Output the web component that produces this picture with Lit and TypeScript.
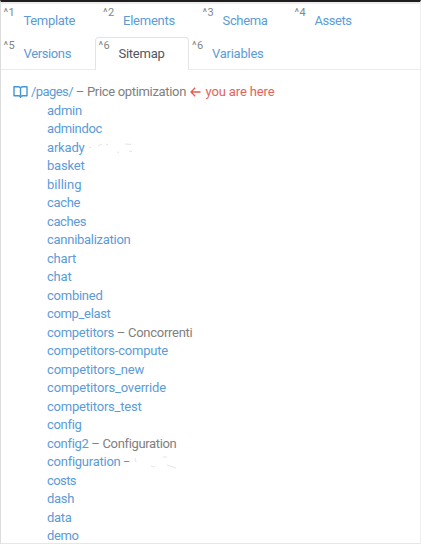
import { LitElement, html, css, svg, nothing } from "lit";
import { customElement } from "lit/decorators.js";

type Tab = { key: string; label: string; text: number; width: number; active?: boolean };
type Page = { name: string; w: number; title?: string; tw?: number; dash?: boolean; marks?: "a" | "b" };

const tabs: Tab[][] = [
  [
    { key: "^1", label: "Template", text: 51.5, width: 99.5 },
    { key: "^2", label: "Elements", text: 52, width: 99.5 },
    { key: "^3", label: "Schema", text: 45, width: 92 },
    { key: "^4", label: "Assets", text: 37, width: 85 },
  ],
  [
    { key: "^5", label: "Versions", text: 47.5, width: 95 },
    { key: "^6", label: "Sitemap", text: 46, width: 93.5, active: true },
    { key: "^6", label: "Variables", text: 51.5, width: 99 },
  ],
];

const pages: Page[] = [
  { name: "admin", w: 35 },
  { name: "admindoc", w: 55 },
  { name: "arkady", w: 37.5, marks: "a" },
  { name: "basket", w: 37.5 },
  { name: "billing", w: 34.5 },
  { name: "cache", w: 33 },
  { name: "caches", w: 39 },
  { name: "cannibalization", w: 83.5 },
  { name: "chart", w: 29 },
  { name: "chat", w: 24.5 },
  { name: "combined", w: 55.5 },
  { name: "comp_elast", w: 63.5 },
  { name: "competitors", w: 67, title: "Concorrenti", tw: 64.5 },
  { name: "competitors-compute", w: 121 },
  { name: "competitors_new", w: 97 },
  { name: "competitors_override", w: 119 },
  { name: "competitors_test", w: 94.5 },
  { name: "config", w: 34 },
  { name: "config2", w: 41, title: "Configuration", tw: 73.5 },
  { name: "configuration", w: 73, dash: true, marks: "b" },
  { name: "costs", w: 29 },
  { name: "dash", w: 27 },
  { name: "data", w: 24.5 },
  { name: "demo", w: 31.5 },
];

const marks = {
  a: svg`<path d="M4 8.5h2M13 6.5l4-1M21 5.5h2M32 13l2 .5M40 5l6 .5M44 12l3 .5"/>`,
  b: svg`<path d="M3 5l1 4M19 13l4 1M31 4h4M35 12l9 3"/>`,
};

const pen = document.createElement("canvas").getContext("2d")!;

/** Letter spacing that sets the text to the given advance width. */
const tracking = (text: string, width: number) => {
  pen.font = "13px Roboto";
  return `letter-spacing:${((width - pen.measureText(text).width) / text.length).toFixed(3)}px`;
};

const fitted = (text: string, width: number, cls = "") =>
  html`<span class="text ${cls}" style=${tracking(text, width)}>${text}</span>`;

@customElement("app-root")
export class AppRoot extends LitElement {
  static styles = css`
    :host {
      display: block;
      box-sizing: border-box;
      width: 421px;
      height: 544px;
      overflow: hidden;
      background: #fff;
      border-top: 2px solid #1f1d1e;
      border-left: 1px solid #dcdcdc;
      border-right: 1px solid #eee;
      border-bottom: 1px solid #e6e6e6;
      font: 13px/18.5px Roboto, "Liberation Sans", sans-serif;
      font-variant-ligatures: none;
      color: #808080;
    }
    .tabs {
      box-sizing: border-box;
      height: 68px;
      padding-top: 2px;
      border-top: 2px solid #ececec;
      border-bottom: 1px solid #ececec;
    }
    .row {
      display: flex;
      height: 31px;
      margin-left: -1px;
    }
    .row + .row {
      height: 33px;
    }
    .tab {
      box-sizing: border-box;
      position: relative;
      flex: none;
      padding: 6px 0 0 23.5px;
      color: #5b9bd8;
    }
    .row + .row .tab {
      padding-top: 8px;
    }
    .row + .row .active {
      color: #50565e;
      background: #fff;
      border: 1px solid #e4e4e4;
      border-bottom: 0;
      border-radius: 4px 4px 0 0;
      padding: 7px 0 0 22.5px;
      height: 33px;
    }
    .key {
      position: absolute;
      left: 3.5px;
      top: 1px;
      font-size: 11px;
      line-height: 12px;
      color: #858585;
      letter-spacing: 0.5px;
    }
    .row + .row .key {
      top: 3px;
    }
    .row + .row .active .key {
      left: 2.5px;
      top: 2px;
    }
    .tree {
      padding: 13px 0 0 12px;
    }
    .line {
      display: flex;
      height: 18.5px;
      white-space: pre;
    }
    .child {
      padding-left: 34px;
    }
    .text {
      flex: none;
    }
    .link {
      color: #5b9bd8;
    }
    .here {
      color: #e2635a;
    }
    .dash {
      width: 14px;
      text-align: center;
    }
    .short {
      width: 12px;
      font-size: 11px;
    }
    .book {
      width: 15px;
      height: 14px;
      margin: 2px 3px 0 0;
      fill: none;
      stroke: #3f97d8;
      stroke-width: 1.4;
      stroke-linejoin: round;
    }
    .arrow {
      width: 11px;
      height: 11px;
      margin: 3px 5px 0 3.5px;
      fill: none;
      stroke: #e25a50;
      stroke-width: 1.3;
    }
    .marks {
      width: 48px;
      height: 18px;
      fill: none;
      stroke: #ddd;
      stroke-width: 0.8;
    }
  `;

  private renderTab(t: Tab) {
    return html`<div class="tab ${t.active ? "active" : ""}" style="width:${t.width}px"><span class="key">${t.key}</span>${fitted(t.label, t.text)}</div>`;
  }

  private renderPage(p: Page) {
    return html`<div class="line child">${fitted(p.name, p.w, "link")}${p.title ? html`<span class="dash">–</span>${fitted(p.title, p.tw!)}` : nothing}${p.dash ? html`<span class="dash short">–</span>` : nothing}${p.marks ? html`<svg class="marks" viewBox="0 0 48 18">${marks[p.marks]}</svg>` : nothing}</div>`;
  }

  render() {
    return html`
      <div class="tabs">${tabs.map((r) => html`<div class="row">${r.map((t) => this.renderTab(t))}</div>`)}</div>
      <div class="tree">
        <div class="line"><svg class="book" viewBox="0 0 15 14"><path d="M7.5 3Q7 1.7 5.2 1.7H1v9h4.5Q7 10.7 7.5 12.3Q8 10.7 9.5 10.7H14v-9h-4.2Q8 1.7 7.5 3V12.3"/></svg>${fitted("/pages/", 42, "link")}<span class="dash">–</span>${fitted("Price optimization", 99)}<svg class="arrow" viewBox="0 0 11 11"><path d="M10.5 6H1M5.2 1.7L1 6L5.2 10.3"/></svg>${fitted("you are here", 69, "here")}</div>
        ${pages.map((p) => this.renderPage(p))}
      </div>
    `;
  }
}
